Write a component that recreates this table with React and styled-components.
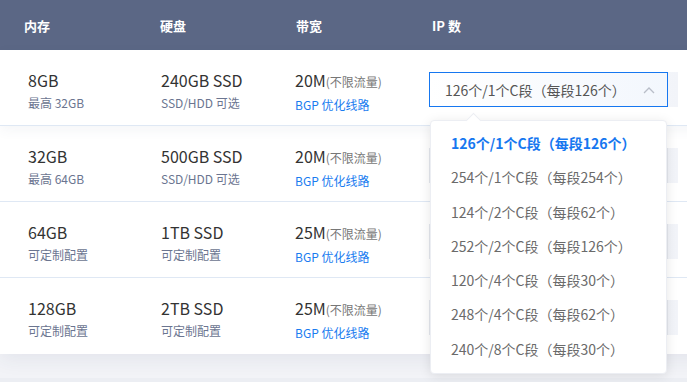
import styled, { createGlobalStyle } from 'styled-components';

const Global = createGlobalStyle`
  html, body {
    margin: 0;
    padding: 0;
    background: #f2f3f7;
    overflow: hidden;
  }
  body {
    font-family: "Noto Sans CJK SC", "Noto Sans", sans-serif;
  }
`;

const Page = styled.div`
  position: relative;
  width: 687px;
  height: 382px;
  overflow: hidden;
`;

const Table = styled.div`
  width: 720px;
  background: #fff;
  box-shadow: 0 6px 18px rgba(40, 60, 100, 0.07);
`;

const NextCard = styled.div`
  margin-top: 24px;
  height: 10px;
  background: #eceef3;
`;

const Header = styled.div`
  display: grid;
  grid-template-columns: 136px 136px 136px 1fr;
  align-items: center;
  height: 50px;
  padding-left: 24px;
  background: #5b6785;
  color: #fff;
  font-size: 13px;
  font-weight: 700;
`;

const Row = styled.div`
  position: relative;
  display: grid;
  grid-template-columns: 133px 134px 134px 1fr;
  height: 76px;
  padding-left: 28px;
  box-sizing: border-box;
  border-bottom: 1px solid ${p => (p.last ? 'transparent' : '#dfe8f4')};
  background: #fff;
  z-index: ${p => (p.active ? 2 : 1)};
  box-shadow: ${p => (p.active ? '0 4px 12px rgba(60, 80, 120, 0.06)' : 'none')};
`;

const Cell = styled.div`
  padding-top: 19px;
`;

const Main = styled.div`
  font-size: 16px;
  line-height: 22px;
  color: #333;
`;

const Note = styled.span`
  font-size: 12px;
  color: #777;
`;

const Sub = styled.div`
  margin-top: 4px;
  font-size: 12px;
  line-height: 16px;
  color: ${p => (p.blue ? '#1a7cf0' : '#6b7590')};
`;

const SelectWrap = styled.div`
  margin-top: 22px;
  width: 249px;
  height: 35px;
  background: linear-gradient(to right, #ffffff, #f2f4f9);
`;

const Select = styled.div`
  display: flex;
  align-items: center;
  justify-content: space-between;
  box-sizing: border-box;
  width: 239px;
  height: 35px;
  padding: 0 12px 0 15px;
  border: 1px solid ${p => (p.open ? '#1677f0' : '#e4e7ee')};
  background: ${p => (p.open ? 'linear-gradient(to right, #ffffff, #f3f7fd)' : '#f5f6fa')};
  font-size: 14px;
  color: #555;
`;

const Menu = styled.div`
  position: absolute;
  left: 430px;
  top: 120px;
  width: 237px;
  box-sizing: border-box;
  padding: 5px 0 7px;
  background: #fff;
  border: 1px solid #eceef3;
  border-radius: 4px;
  box-shadow: 0 2px 12px rgba(0, 0, 0, 0.1);
  z-index: 10;

  &::before {
    content: '';
    position: absolute;
    top: -6px;
    left: 37px;
    width: 10px;
    height: 10px;
    background: #fff;
    border-left: 1px solid #eceef3;
    border-top: 1px solid #eceef3;
    transform: rotate(45deg);
  }
`;

const Option = styled.div`
  height: 34.3px;
  line-height: 34px;
  padding-left: 20px;
  font-size: 14px;
  color: ${p => (p.selected ? '#1677f0' : '#6a6a6a')};
  font-weight: ${p => (p.selected ? 700 : 400)};
`;

const Chevron = () => (
  <svg width="12" height="8" viewBox="0 0 12 8">
    <path d="M1 7 L6 2 L11 7" fill="none" stroke="#b9bec8" strokeWidth="1.3" />
  </svg>
);

const rows = [
  ['8GB', '最高 32GB', '240GB SSD', 'SSD/HDD 可选', '20M'],
  ['32GB', '最高 64GB', '500GB SSD', 'SSD/HDD 可选', '20M'],
  ['64GB', '可定制配置', '1TB SSD', '可定制配置', '25M'],
  ['128GB', '可定制配置', '2TB SSD', '可定制配置', '25M'],
];

const options = [
  '126个/1个C段（每段126个）',
  '254个/1个C段（每段254个）',
  '124个/2个C段（每段62个）',
  '252个/2个C段（每段126个）',
  '120个/4个C段（每段30个）',
  '248个/4个C段（每段62个）',
  '240个/8个C段（每段30个）',
];

export default function App() {
  return (
    <Page>
      <Global />
      <Table>
        <Header>
          <div>内存</div>
          <div>硬盘</div>
          <div>带宽</div>
          <div>IP 数</div>
        </Header>
        {rows.map((r, i) => (
          <Row key={i} active={i === 0} last={i === rows.length - 1}>
            <Cell>
              <Main>{r[0]}</Main>
              <Sub>{r[1]}</Sub>
            </Cell>
            <Cell>
              <Main>{r[2]}</Main>
              <Sub>{r[3]}</Sub>
            </Cell>
            <Cell>
              <Main>
                {r[4]}
                <Note>(不限流量)</Note>
              </Main>
              <Sub blue>BGP 优化线路</Sub>
            </Cell>
            <div>
              <SelectWrap>
                {/* closed selects sit under the open menu, so their label is not drawn */}
                <Select open={i === 0}>
                  <span>{i === 0 ? options[0] : ''}</span>
                  <Chevron />
                </Select>
              </SelectWrap>
            </div>
          </Row>
        ))}
      </Table>
      <NextCard />
      <Menu>
        {options.map((o, i) => (
          <Option key={o} selected={i === 0}>
            {o}
          </Option>
        ))}
      </Menu>
    </Page>
  );
}
